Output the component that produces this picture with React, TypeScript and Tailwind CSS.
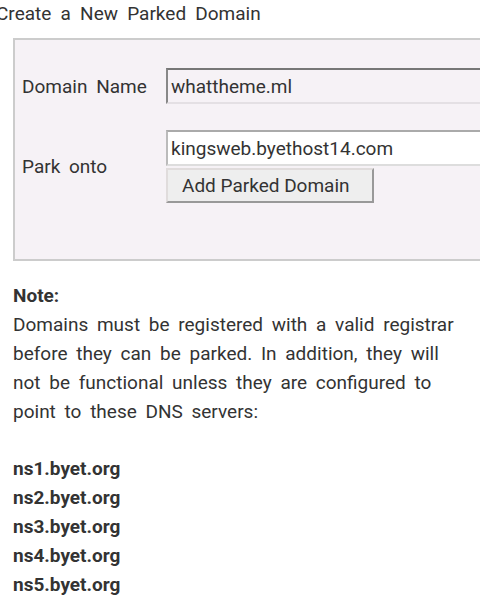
import React from 'react';

const servers = ['ns1.byet.org', 'ns2.byet.org', 'ns3.byet.org', 'ns4.byet.org', 'ns5.byet.org'];

const App: React.FC = () => {
  return (
    <div className="w-[480px] h-[610px] overflow-hidden bg-white text-[#333] text-[19px] leading-[29px] [font-family:Roboto,'Liberation_Sans',sans-serif]">
      {/* Title */}
      <div className="ml-[-4px] mt-[-1px] [word-spacing:4.5px] whitespace-nowrap">Create a New Parked Domain</div>

      {/* Form box */}
      <div className="ml-[13px] mt-[10px] w-[520px] h-[223px] border-2 border-r-0 border-[#cccccc] bg-[#f6f2f6] pl-[7px] pt-[28px]">
        <div className="flex items-center h-[36px]">
          <div className="w-[144px] [word-spacing:4px]">Domain Name</div>
          <div className="flex-1 h-[36px] border-2 border-t-[#777] border-l-[#888] border-b-[#e4e0e4] border-r-[#e4e0e4] pl-[3px] flex items-center">
            whattheme.ml
          </div>
        </div>
        <div className="flex items-center mt-[26px]">
          <div className="w-[144px] [word-spacing:4px]">Park onto</div>
          <div className="flex-1 flex flex-col">
            <div className="h-[36px] bg-white border-2 border-t-[#aaa] border-l-[#bbb] border-b-[#ddd] border-r-[#ddd] pl-[3px] flex items-center">
              kingsweb.byethost14.com
            </div>
            <div className="mt-[2px] w-[208px] h-[35px] bg-[#eeeeee] border-2 border-t-[#e0dcdc] border-l-[#e0dcdc] border-b-[#999] border-r-[#999] flex items-center pl-[14px]">
              Add Parked Domain
            </div>
          </div>
        </div>
      </div>

      {/* Note */}
      <div className="ml-[13px] mt-[20px] w-[450px]">
        <div className="font-bold">Note:</div>
        <p className="[word-spacing:4px]">
          Domains must be registered with a valid registrar before they can be parked. In addition, they will not be functional unless they are configured to point to these DNS servers:
        </p>
        <div className="h-[28px]" />
        {servers.map((s) => (
          <div key={s} className="font-bold">{s}</div>
        ))}
      </div>
    </div>
  );
};

export default App;
